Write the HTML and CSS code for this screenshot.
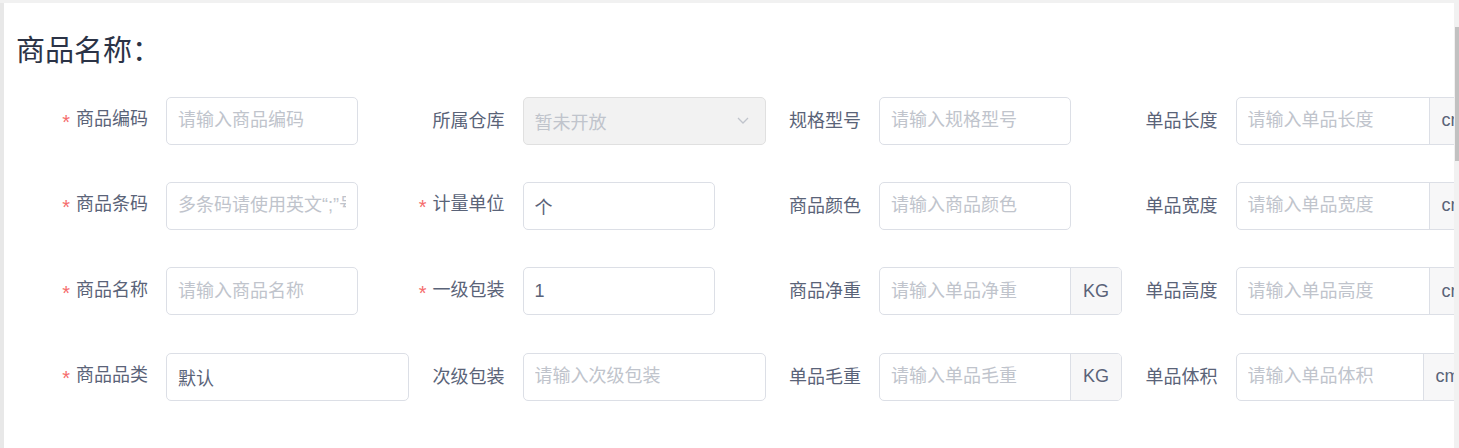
FILE: index.html
```html
<!DOCTYPE html>
<html lang="zh-CN">
<head>
<meta charset="utf-8">
<title>商品信息</title>
<link rel="stylesheet" href="styles.css">
</head>
<body>
<div class="page">
  <div class="gutter"></div>
  <main class="panel">
    <h1 class="title">商品名称：</h1>
    <div class="form">
      <div class="item"><label class="label"><span class="req">*</span>商品编码</label><div class="ctl w-sm"><input class="inp" placeholder="请输入商品编码"></div></div>
      <div class="item"><label class="label">所属仓库</label><div class="ctl w-md select"><span class="sel-text">暂未开放</span><svg class="chev" width="12" height="7" viewBox="0 0 12 7"><polyline points="1,1 6,6 11,1" fill="none" stroke="#c0c4cc" stroke-width="1.3"/></svg></div></div>
      <div class="item"><label class="label">规格型号</label><div class="ctl w-sm"><input class="inp" placeholder="请输入规格型号"></div></div>
      <div class="item"><label class="label">单品长度</label><div class="ctl w-md group"><input class="inp" placeholder="请输入单品长度"><span class="append">cm</span></div></div>

      <div class="item"><label class="label"><span class="req">*</span>商品条码</label><div class="ctl w-sm"><input class="inp" placeholder="多条码请使用英文“;”号分隔"></div></div>
      <div class="item"><label class="label"><span class="req">*</span>计量单位</label><div class="ctl w-sm"><input class="inp" value="个"></div></div>
      <div class="item"><label class="label">商品颜色</label><div class="ctl w-sm"><input class="inp" placeholder="请输入商品颜色"></div></div>
      <div class="item"><label class="label">单品宽度</label><div class="ctl w-md group"><input class="inp" placeholder="请输入单品宽度"><span class="append">cm</span></div></div>

      <div class="item"><label class="label"><span class="req">*</span>商品名称</label><div class="ctl w-sm"><input class="inp" placeholder="请输入商品名称"></div></div>
      <div class="item"><label class="label"><span class="req">*</span>一级包装</label><div class="ctl w-sm"><input class="inp" value="1"></div></div>
      <div class="item"><label class="label">商品净重</label><div class="ctl w-md group"><input class="inp" placeholder="请输入单品净重"><span class="append">KG</span></div></div>
      <div class="item"><label class="label">单品高度</label><div class="ctl w-md group"><input class="inp" placeholder="请输入单品高度"><span class="append">cm</span></div></div>

      <div class="item"><label class="label"><span class="req">*</span>商品品类</label><div class="ctl w-md"><input class="inp" value="默认"></div></div>
      <div class="item"><label class="label">次级包装</label><div class="ctl w-md"><input class="inp" placeholder="请输入次级包装"></div></div>
      <div class="item"><label class="label">单品毛重</label><div class="ctl w-md group"><input class="inp" placeholder="请输入单品毛重"><span class="append">KG</span></div></div>
      <div class="item"><label class="label">单品体积</label><div class="ctl w-md group"><input class="inp" placeholder="请输入单品体积"><span class="append">cm³</span></div></div>
    </div>
  </main>
  <div class="scrollbar"><div class="thumb"></div></div>
</div>
</body>
</html>
```
FILE: styles.css
```css
* { box-sizing: border-box; }
html, body { margin: 0; padding: 0; }
body {
  background: #f1f1f1;
  height: 448px;
  overflow: hidden;
  font-family: "Liberation Sans", "Noto Sans CJK SC", sans-serif;
}
.page {
  display: flex;
  margin-top: 3px;
  height: 445px;
}
.gutter {
  width: 4px;
  background: #e8e8e8;
  flex: none;
}
.panel {
  flex: 1;
  min-width: 0;
  background: #fff;
  overflow: hidden;
  padding: 25px 12px 0 12px;
}
.scrollbar {
  width: 5px;
  flex: none;
  background: #f1f1f1;
  padding-top: 24px;
  padding-left: 1px;
}
.thumb {
  width: 4px;
  height: 134px;
  background: #c1c1c1;
}
.title {
  margin: 0;
  font-family: "Noto Sans CJK SC", sans-serif;
  font-weight: 400;
  font-size: 29px;
  line-height: 40px;
  color: #2b3346;
}
.form {
  margin-top: 28.5px;
  display: grid;
  grid-template-columns: repeat(4, 1fr);
  row-gap: 37.4px;
}
.item {
  display: flex;
  align-items: center;
  height: 48px;
  min-width: 0;
}
.label {
  width: 150px;
  flex: none;
  padding-right: 18px;
  text-align: right;
  font-size: 18px;
  color: #5a6378;
  line-height: 48px;
  white-space: nowrap;
}
.req {
  color: #f56c6c;
  font-size: 20px;
  margin-right: 6px;
  vertical-align: -4px;
}
.ctl {
  flex: none;
  height: 48px;
  border: 1px solid #dcdfe6;
  border-radius: 5px;
  background: #fff;
  display: flex;
  align-items: center;
  overflow: hidden;
}
.w-sm { width: 192px; }
.w-md { width: 243px; }
.inp {
  flex: 1;
  min-width: 0;
  height: 100%;
  border: 0;
  outline: none;
  background: transparent;
  padding: 0 11px;
  font-family: "Liberation Sans", "Noto Sans CJK SC", sans-serif;
  font-size: 18px;
  color: #5a6378;
}
.inp::placeholder {
  color: #c0c4cc;
  opacity: 1;
}
.select {
  background: #f2f2f2;
  border-color: #e0e0e0;
  padding: 0 16px 0 11px;
  justify-content: space-between;
}
.sel-text {
  font-size: 18px;
  color: #c0c4cc;
}
.chev { flex: none; }
.append {
  flex: none;
  height: 100%;
  display: flex;
  align-items: center;
  padding: 0 12px;
  background: #f7f7f8;
  border-left: 1px solid #dcdfe6;
  font-size: 18px;
  color: #5a6378;
}
```
